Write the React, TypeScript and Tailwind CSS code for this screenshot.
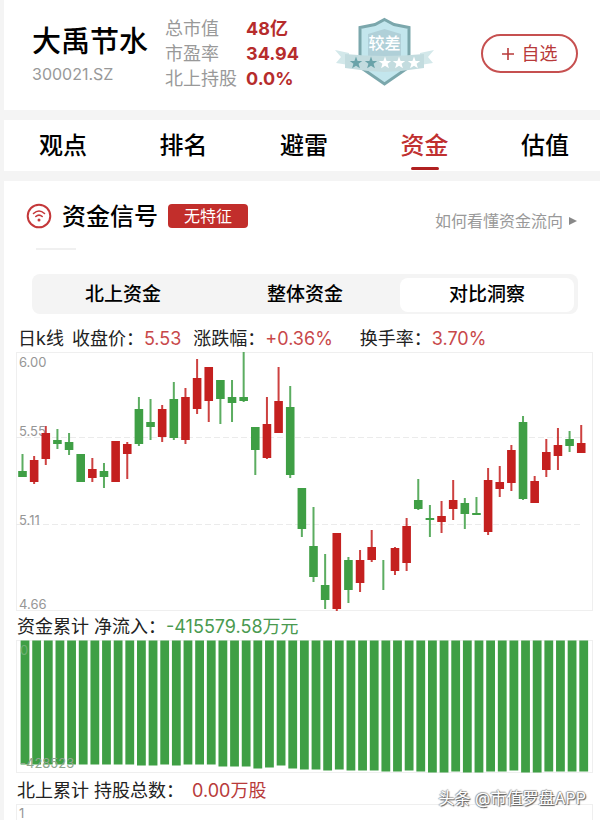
import { useState } from 'react';

const RED = '#c4201f';
const GREEN = '#3f9f45';
const STEP = 11.64;

// [direction, high, body top, body bottom, low], measured down from the top of the chart
type Candle = ['up' | 'down', number, number, number, number];

const candles: Candle[] = [
  ['down', 102, 119, 125, 125],
  ['up', 104, 108, 130, 132],
  ['up', 74, 81, 107, 113],
  ['down', 77, 88, 92, 97],
  ['down', 81, 90, 98, 103],
  ['down', 102, 102, 130, 130],
  ['up', 106, 117, 126, 130],
  ['down', 111, 119, 125, 136],
  ['up', 89, 89, 130, 130],
  ['up', 90, 92, 102, 127],
  ['down', 45, 57, 92, 94],
  ['down', 47, 70, 75, 88],
  ['up', 53, 57, 85, 90],
  ['down', 30, 47, 86, 88],
  ['up', 36, 45, 88, 92],
  ['up', 7, 26, 57, 62],
  ['up', 15, 15, 49, 70],
  ['down', 28, 28, 47, 72],
  ['down', 28, 45, 51, 70],
  ['down', 0, 45, 49, 50],
  ['down', 75, 75, 98, 123],
  ['up', 45, 72, 106, 107],
  ['up', 15, 49, 81, 81],
  ['down', 34, 55, 123, 126],
  ['down', 136, 136, 177, 185],
  ['down', 155, 194, 225, 230],
  ['down', 202, 233, 248, 257],
  ['up', 181, 181, 257, 259],
  ['down', 205, 208, 238, 251],
  ['up', 198, 208, 231, 240],
  ['up', 178, 195, 208, 210],
  ['down', 208, 208, 208, 238],
  ['up', 195, 196, 219, 223],
  ['up', 166, 174, 211, 219],
  ['down', 127, 148, 157, 158],
  ['down', 153, 166, 168, 185],
  ['up', 149, 164, 170, 181],
  ['up', 128, 148, 157, 168],
  ['down', 146, 151, 162, 177],
  ['down', 145, 161, 163, 163],
  ['up', 116, 128, 180, 183],
  ['up', 114, 130, 137, 145],
  ['up', 93, 98, 131, 139],
  ['down', 64, 70, 147, 148],
  ['up', 124, 129, 151, 151],
  ['up', 87, 100, 118, 125],
  ['up', 76, 93, 104, 118],
  ['down', 79, 87, 94, 100],
  ['up', 73, 91, 101, 101],
];

const flows = [
  124, 124, 124, 124, 124, 124, 124, 124, 124, 124, 125, 125, 124, 125, 124,
  124, 124, 126, 126, 126, 128, 127, 125, 128, 129, 129, 130, 129, 130, 130,
  130, 131, 131, 130, 131, 132, 132, 131, 132, 132, 131, 131, 130, 132, 132,
  131, 131, 131, 131,
];

const tabs = ['观点', '排名', '避雷', '资金', '估值'];
const sources = ['北上资金', '整体资金', '对比洞察'];
const stats = [
  { label: '总市值', value: '48亿' },
  { label: '市盈率', value: '34.94' },
  { label: '北上持股', value: '0.0%' },
];

const STAR = 'M0-6.500 1.600-2.100 6.200-2 2.600.8 3.900 5.300 0 2.700-3.900 5.300-2.600.8-6.200-2-1.600-2.100Z';

const Badge = () => (
  <svg viewBox="0 0 100 70" className="w-[100px] h-[70px] shrink-0" role="img" aria-label="较差">
    <path d="M0 33 14 36V48L1 46 6 40Z" fill="#d3e8ea" />
    <path d="M99 33 85 36V48L98 46 93 40Z" fill="#d3e8ea" />
    <path d="M49.500 2.500 59 7.500 74 10.500V50L49.500 67 25 50V10.500L40 7.500Z" fill="#c3e6ed" stroke="#7ba7ac" strokeWidth="3" />
    <path d="M49.500 12 66 17V44H33V17Z" fill="#b0d0d8" />
    <text x="49.500" y="32" textAnchor="middle" fontSize="16" fontWeight="500" fill="#ffffff">
      较差
    </text>
    <path d="M10 37Q49.500 41 89 37V51Q70 54 49.500 55 29 54 10 51Z" fill="#c3dcdf" />
    {[21, 36, 50, 64, 79].map((x, i) => (
      <path key={x} d={STAR} transform={`translate(${x} 46)`} fill={i < 2 ? '#6aa3a9' : '#ffffff'} />
    ))}
  </svg>
);

const SignalIcon = () => (
  <svg viewBox="0 0 26 26" className="w-[26px] h-[26px] shrink-0" fill="none" stroke="#c4383a" strokeLinecap="round">
    <circle cx="13" cy="13" r="11.300" strokeWidth="2" />
    <path d="M7.500 10.500Q13 5.500 18.500 10.500M9.800 13.500Q13 10.600 16.200 13.500" strokeWidth="1.600" />
    <circle cx="13" cy="17" r="1.500" fill="#c4383a" stroke="none" />
  </svg>
);

const PriceChart = () => (
  <svg viewBox="0 0 577 260" className="block w-full" role="img" aria-label="日k线">
    <rect x="0.5" y="0.5" width="576" height="258" fill="none" stroke="#efefef" />
    <path d="M0 85.500H565M0 172.500H565" stroke="#ebebeb" strokeDasharray="6 3" />
    <g fontSize="13" fill="#969696">
      <text x="3" y="15">6.00</text>
      <text x="3" y="84">5.55</text>
      <text x="3" y="173">5.11</text>
      <text x="3" y="257">4.66</text>
    </g>
    {candles.map(([dir, high, top, bottom, low], i) => {
      const x = 6.5 + i * STEP;
      return (
        <g key={i} fill={dir === 'up' ? RED : GREEN}>
          <rect x={x - 1} y={high} width="2" height={low - high} opacity="0.85" />
          <rect x={x - 4.3} y={top} width="8.600" height={bottom - top} />
        </g>
      );
    })}
  </svg>
);

const FlowChart = () => (
  <svg viewBox="0 0 577 133" className="block w-full" role="img" aria-label="资金累计">
    <rect x="0.5" y="0.5" width="576" height="132" fill="none" stroke="#efefef" />
    {flows.map((h, i) => (
      <rect key={i} x={4.6 + i * STEP} y="0.5" width="8.800" height={h} fill={GREEN} />
    ))}
    <g fontSize="13">
      <text x="4" y="15" fill="#6fae73">0</text>
      <text x="4" y="128" fill="#8fa58f">-428523</text>
    </g>
  </svg>
);

const App = () => {
  const [tab, setTab] = useState('资金');
  const [source, setSource] = useState('对比洞察');

  return (
    <div className="relative bg-[#f4f4f4] pl-1 min-h-screen overflow-hidden flex flex-col gap-[10px] text-black font-['Inter','Noto_Sans_CJK_SC',sans-serif]">
      <header className="bg-white flex items-center pl-7 pr-[22px] pt-4 pb-[19px]">
        <div>
          <h1 className="text-[29px] leading-[36px] font-medium whitespace-nowrap">大禹节水</h1>
          <p className="text-[16px] leading-[20px] mt-1 text-[#999]">300021.SZ</p>
        </div>
        <dl className="ml-[17px] text-[18px] leading-[25px] whitespace-nowrap">
          {stats.map((s) => (
            <div key={s.label} className="flex">
              <dt className="w-[81px] text-[#999]">{s.label}</dt>
              <dd className="w-[56px] font-bold text-[#b62c2c]">{s.value}</dd>
            </div>
          ))}
        </dl>
        <div className="ml-[33px] pb-1">
          <Badge />
        </div>
        <button
          type="button"
          className="ml-auto w-[97px] h-[39px] rounded-full border-2 border-[#c65050] text-[#b83a3a] text-[18px] flex items-center justify-center gap-2 whitespace-nowrap"
        >
          <svg viewBox="0 0 12 12" className="w-3 h-3" stroke="currentColor" strokeWidth="1.600">
            <path d="M6 0V12M0 6H12" />
          </svg>
          自选
        </button>
      </header>

      <nav className="bg-white flex justify-between pl-[35px] pr-[31px] pt-2">
        {tabs.map((t) => (
          <button
            key={t}
            type="button"
            onClick={() => setTab(t)}
            className={`flex flex-col items-center text-[24px] leading-[36px] font-medium ${t === tab ? 'text-[#c03030]' : ''}`}
          >
            {t}
            <span className={`w-7 h-[3px] mt-[3px] mb-px rounded-full ${t === tab ? 'bg-[#b02020]' : ''}`} />
          </button>
        ))}
      </nav>

      <main className="bg-white grow pl-3 pr-[7px] pt-5">
        <div className="flex items-center pl-[10px] pr-4 h-[30px]">
          <SignalIcon />
          <h2 className="ml-[10px] text-[24px] leading-[30px] pt-[2px] font-medium">资金信号</h2>
          <span className="ml-[10px] w-20 h-6 rounded bg-[#c22e2b] text-white text-[16px] leading-6 text-center">
            无特征
          </span>
          <a href="#help" className="ml-auto mt-[10px] flex items-center gap-[6px] text-[16px] text-[#999]">
            如何看懂资金流向
            <svg viewBox="0 0 8 8" className="w-2 h-2" fill="#888">
              <path d="M0 0 8 4 0 8Z" />
            </svg>
          </a>
        </div>
        <div className="ml-5 mt-[17px] w-10 h-[2px] bg-[#f0f0f0]" />

        <div className="ml-4 mr-[15px] mt-6 h-10 rounded-lg bg-[#f4f4f4] grid grid-cols-3 text-[19px] font-medium">
          {sources.map((s) => (
            <button
              key={s}
              type="button"
              onClick={() => setSource(s)}
              className={`m-1 rounded-lg leading-[34px] ${s === source ? 'bg-white' : ''}`}
            >
              {s}
            </button>
          ))}
        </div>

        <div className="flex pl-[2px] pt-3 text-[18px] leading-[26px] text-[#222] whitespace-nowrap">
          <span>日k线</span>
          <span className="ml-2">收盘价：</span>
          <span className="text-[#c8484a]">5.53</span>
          <span className="ml-3">涨跌幅：</span>
          <span className="text-[#c8484a]">+0.36%</span>
          <span className="ml-[27px]">换手率：</span>
          <span className="text-[#c8484a]">3.70%</span>
        </div>
        <PriceChart />

        <div className="flex pl-px pt-px text-[18px] leading-[27px] text-[#222] whitespace-nowrap">
          <span>资金累计 净流入：</span>
          <span className="text-[#4a9a50]">-415579.58万元</span>
        </div>
        <FlowChart />

        <div className="flex pl-px pt-1 text-[18px] leading-[27px] text-[#222] whitespace-nowrap">
          <span>北上累计 持股总数：</span>
          <span className="ml-2 text-[#b83a3a]">0.00万股</span>
        </div>
        <div className="border border-b-0 border-[#efefef] h-4 pl-[2px] pt-[2px] text-[13px] leading-[13px] text-[#969696]">
          1
        </div>
      </main>

      <p className="absolute right-[14px] bottom-[10px] text-[16px] leading-6 text-white whitespace-nowrap [text-shadow:1px_1px_1px_#555,-1px_0_1px_#999,0_-1px_1px_#aaa]">
        头条 @市值罗盘APP
      </p>
    </div>
  );
};

export default App;
